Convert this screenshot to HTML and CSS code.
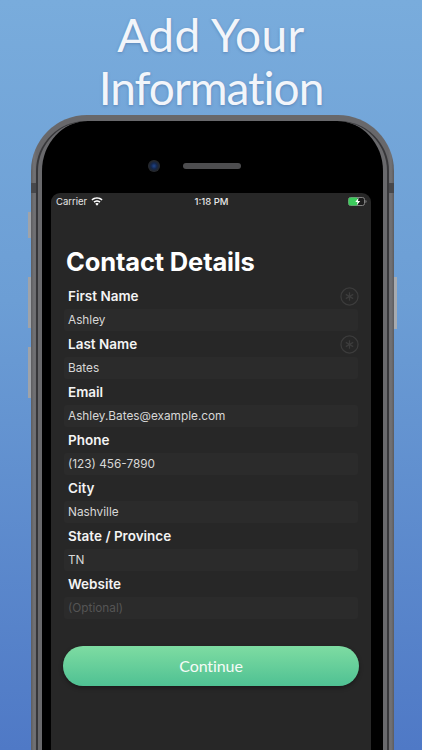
FILE: index.html
```html
<!DOCTYPE html>
<html lang="en">
<head>
<meta charset="utf-8">
<title>Add Your Information</title>
<link rel="stylesheet" href="styles.css">
</head>
<body>
<main class="poster">
  <h1 class="headline"><span class="line-one">Add Your</span><span class="line-two">Information</span></h1>
  <div class="phone">
    <span class="btn btn-mute"></span>
    <span class="btn btn-vol-up"></span>
    <span class="btn btn-vol-down"></span>
    <span class="btn btn-power"></span>
    <span class="band band-left"></span>
    <span class="band band-right"></span>
    <div class="bezel">
      <div class="earpiece-row">
        <span class="camera"></span>
        <span class="speaker"></span>
      </div>
      <div class="screen">
        <div class="status">
          <div class="status-left">
            <span>Carrier</span>
            <svg class="wifi" viewBox="0 0 14 10"><path d="M7 0C4.400 0 2.200 1 .5 2.600l1.200 1.300C3.100 2.600 5 1.800 7 1.800s3.900.8 5.300 2.100l1.200-1.300C11.800 1 9.600 0 7 0z" fill="#fff"/><path d="M7 3.400C5.400 3.400 4 4 2.900 5.100l1.200 1.300C4.900 5.700 5.900 5.200 7 5.200s2.100.5 2.900 1.200l1.200-1.300C10 4 8.600 3.400 7 3.400z" fill="#fff"/><path d="M7 6.800c-.8 0-1.500.3-2 .8L7 10l2-2.400c-.5-.5-1.200-.8-2-.8z" fill="#fff"/></svg>
          </div>
          <span class="status-time">1:18 PM</span>
          <svg class="battery" viewBox="0 0 19 9"><rect x=".5" y=".5" width="16" height="8" rx="2" fill="#1d1d1d" stroke="#8c8c8c" stroke-width=".9"/><rect x=".5" y=".5" width="9.500" height="8" rx="2" fill="#3ccb5c"/><path d="M17.500 3v3c.6-.2 1-.8 1-1.500s-.4-1.300-1-1.500z" fill="#8c8c8c"/><path d="M10.600.8 7.300 5h2.200l-.7 3.200L12.200 4H10z" fill="#fff"/></svg>
        </div>
        <h2 class="page-title">Contact Details</h2>
        <form class="fields">
          <div class="field">
            <label class="label">First Name</label>
            <div class="input">Ashley</div>
            <svg class="req" viewBox="0 0 20 20"><circle cx="10" cy="10" r="9"/><path d="M10 5.500v9M6.100 7.750l7.800 4.500M13.900 7.750l-7.800 4.500"/></svg>
          </div>
          <div class="field">
            <label class="label">Last Name</label>
            <div class="input">Bates</div>
            <svg class="req" viewBox="0 0 20 20"><circle cx="10" cy="10" r="9"/><path d="M10 5.500v9M6.100 7.750l7.800 4.500M13.900 7.750l-7.800 4.500"/></svg>
          </div>
          <div class="field">
            <label class="label">Email</label>
            <div class="input">Ashley.Bates@example.com</div>
          </div>
          <div class="field">
            <label class="label">Phone</label>
            <div class="input">(123) 456-7890</div>
          </div>
          <div class="field">
            <label class="label">City</label>
            <div class="input">Nashville</div>
          </div>
          <div class="field">
            <label class="label">State / Province</label>
            <div class="input">TN</div>
          </div>
          <div class="field">
            <label class="label">Website</label>
            <div class="input placeholder">(Optional)</div>
          </div>
        </form>
        <div class="cta">Continue</div>
      </div>
    </div>
  </div>
</main>
</body>
</html>
```
FILE: styles.css
```css
* { box-sizing: border-box; }
html, body { margin: 0; padding: 0; }
body { width: 422px; height: 750px; overflow: hidden; }
.poster {
  width: 422px;
  height: 750px;
  overflow: hidden;
  background: linear-gradient(180deg, #79acdc 0%, #6c9ed5 40%, #4f79c6 100%);
  display: flex;
  flex-direction: column;
  align-items: center;
}
.headline {
  margin: 8px 0 0;
  height: 107px;
  flex: none;
  font-family: "Lato", sans-serif;
  font-weight: 400;
  font-size: 46px;
  line-height: 53px;
  color: #f2f5fa;
  text-align: center;
  text-shadow: 0 1px 3px rgba(40, 70, 120, .35);
}
.line-one { display: block; letter-spacing: .4px; }
.line-two { display: block; letter-spacing: -1px; }
.phone {
  position: relative;
  width: 363px;
  height: 700px;
  flex: none;
  margin-left: 3px;
  padding: 6px 7px 0;
  background: linear-gradient(90deg, #5c5c5f 0, #727275 3px, #68686b 6px, #68686b 357px, #727275 360px, #5c5c5f 363px);
  border-radius: 56px 56px 0 0;
}
.btn { position: absolute; width: 3px; height: 51px; background: #a0a3a8; }
.btn-mute { left: -3px; top: 97px; height: 26px; }
.btn-vol-up { left: -3px; top: 162px; }
.btn-vol-down { left: -3px; top: 232px; }
.btn-power { right: -3px; top: 162px; height: 52px; background: #a7abb0; }
.band { position: absolute; top: 68px; width: 5px; height: 10px; background: #48484b; }
.band-left { left: 0; }
.band-right { right: 0; }
.bezel {
  position: relative;
  height: 100%;
  background: #000;
  border: solid #69696c;
  border-width: 0 4px;
  border-radius: 50px 50px 0 0;
  box-shadow: -2px 0 0 #37373a, 2px 0 0 #37373a;
  padding: 0 12px 0 9px;
  display: flex;
  flex-direction: column;
}
.earpiece-row {
  height: 72px;
  flex: none;
  padding: 38px 0 0 97px;
  display: flex;
  align-items: flex-start;
  gap: 23px;
}
.camera {
  width: 12px;
  height: 12px;
  margin-top: 1px;
  border-radius: 50%;
  background: radial-gradient(circle, #1f458c 0, #14264a 35%, #23262b 60%, #3e4044 100%);
}
.speaker {
  width: 58px;
  height: 6px;
  margin-top: 4px;
  border-radius: 3px;
  background: #4d4d4f;
}
.screen {
  flex: 1;
  background: #272727;
  border-radius: 9px 9px 0 0;
  padding: 0 12px;
  color: #fff;
  font-family: "Inter", sans-serif;
}
.status {
  height: 17px;
  margin: 0 -8px 0 -7px;
  display: grid;
  grid-template-columns: 1fr auto 1fr;
  align-items: center;
  font-size: 9.500px;
  color: #e6e6e6;
}
.status-left { display: flex; align-items: center; gap: 4px; }
.wifi { width: 12px; height: 9px; }
.status-time { font-weight: 500; }
.battery { width: 19px; height: 9px; justify-self: end; }
.page-title {
  margin: 35px 0 0 3px;
  height: 33px;
  font-size: 25.500px;
  line-height: 33px;
  font-weight: 700;
  letter-spacing: -.15px;
  color: #fff;
}
.fields { display: flex; flex-direction: column; margin-top: 7px; }
.field { position: relative; height: 48px; }
.label {
  display: block;
  height: 24px;
  margin-left: 5px;
  font-size: 13.500px;
  line-height: 22px;
  font-weight: 600;
  color: #f4f4f4;
}
.input {
  width: 294px;
  height: 22px;
  margin-left: 1px;
  padding-left: 4px;
  background: #2b2b2b;
  border-radius: 3px;
  font-size: 11.800px;
  line-height: 22px;
  color: #d8d8d8;
}
.placeholder { color: #555; }
.req {
  position: absolute;
  top: 2px;
  right: 0;
  width: 19px;
  height: 19px;
  fill: none;
  stroke: #3c3c3c;
  stroke-width: 1.300;
}
.cta {
  width: 296px;
  height: 40px;
  margin-top: 25px;
  border-radius: 20px;
  background: linear-gradient(180deg, #7edca2 0%, #4fc193 100%);
  box-shadow: 0 2px 4px rgba(0, 0, 0, .35);
  font-family: "Lato", sans-serif;
  font-size: 16px;
  line-height: 40px;
  letter-spacing: -.1px;
  text-align: center;
  color: #f5fbf7;
}
```
